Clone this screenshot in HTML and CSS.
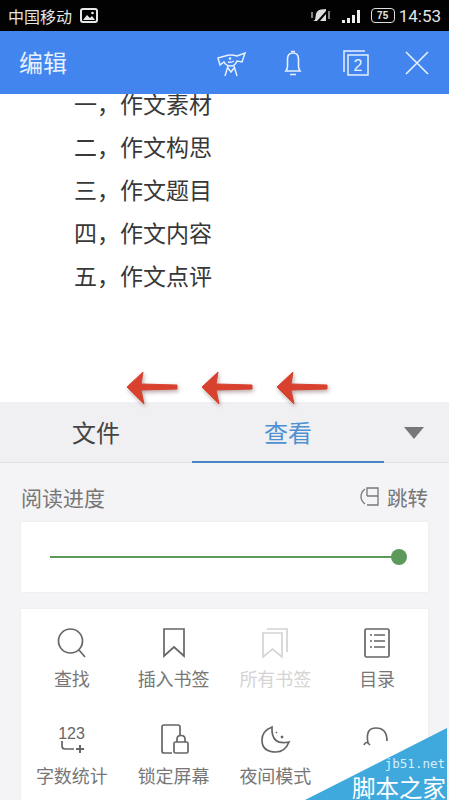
FILE: index.html
```html
<!DOCTYPE html>
<html>
<head>
    <meta charset="utf-8">
    <title>编辑</title>
    <link rel="stylesheet" href="styles.css">
</head>
<body>
    <div class="screen">
        <!-- status bar -->
        <div class="status-bar">
            <div class="status-left">
                <span class="carrier">中国移动</span>
                <svg class="pic-icon" width="18" height="15" viewBox="0 0 18 15">
                    <rect x="1" y="1" width="16" height="13" rx="2" fill="none" stroke="#e8e8e8" stroke-width="2"/>
                    <path d="M3 12 L7 7 L10 10 L12 8 L15 12 Z" fill="#e8e8e8"/>
                    <circle cx="12.500" cy="5" r="1.300" fill="#e8e8e8"/>
                </svg>
            </div>
            <div class="status-right">
                <svg class="mute-icon" width="20" height="16" viewBox="0 0 20 16">
                    <path d="M4 12 L5 6 Q6 2 10 1.500 L15 1 L15 3 L6 13 L2 13 Z" fill="#dedede"/>
                    <path d="M9 13 L15 6 L15 13 Z" fill="#dedede"/>
                    <path d="M1 4 L1 10 M18 3 L18 11" stroke="#aaa" stroke-width="1.500"/>
                </svg>
                <svg class="signal-icon" width="22" height="14" viewBox="0 0 22 14">
                    <rect x="0" y="11" width="3" height="3" fill="#eee"/>
                    <rect x="5" y="9" width="3" height="5" fill="#eee"/>
                    <rect x="10" y="6" width="3" height="8" fill="#eee"/>
                    <rect x="15" y="1" width="3" height="13" fill="#eee"/>
                </svg>
                <span class="battery"><span class="battery-level">75</span></span>
                <span class="clock">14:53</span>
            </div>
        </div>

        <!-- blue title bar -->
        <div class="title-bar">
            <span class="title-text">编辑</span>
            <div class="title-icons">
                <svg width="32" height="32" viewBox="0 0 32 32" fill="none" stroke="#e6f0ff" stroke-width="1.500">
                    <path d="M3 11 L10 9 Q16 7 22 9 L30 6 L27 15 L22 14 Q20 19 16 19 Q11 19 9 15 L5 18 Z"/>
                    <path d="M13 19 L10 29 M19 19 L22 29 M13 21 L16 25 L19 21"/>
                    <path d="M13 15 Q16 16 19 14"/>
                    <circle cx="15" cy="11.500" r="0.600"/>
                </svg>
                <svg width="32" height="32" viewBox="0 0 32 32" fill="none" stroke="#e6f0ff" stroke-width="1.600">
                    <path d="M9 24 Q10.500 22 10.500 19 L10.500 12 Q10.500 6 16 6 Q21.500 6 21.500 12 L21.500 19 Q21.500 22 23 24 Z"/>
                    <path d="M14 4.500 L18 4.500 M13 27.500 L19 27.500"/>
                </svg>
                <svg class="tabs-icon" width="32" height="32" viewBox="0 0 32 32" fill="none" stroke="#e6f0ff" stroke-width="1.500">
                    <path d="M26 4 L5 4 L5 25"/>
                    <rect x="9" y="8" width="20" height="20"/>
                    <text x="19" y="24" class="tabs-count">2</text>
                </svg>
                <svg width="32" height="32" viewBox="0 0 32 32" fill="none" stroke="#e6f0ff" stroke-width="1.600">
                    <path d="M5 5 L27 27 M27 5 L5 27"/>
                </svg>
            </div>
        </div>

        <!-- document text -->
        <div class="doc">
            <p>一，作文素材</p>
            <p>二，作文构思</p>
            <p>三，作文题目</p>
            <p>四，作文内容</p>
            <p>五，作文点评</p>
        </div>

        <!-- bottom panel -->
        <div class="panel">
            <div class="tabs">
                <div class="tab">文件</div>
                <div class="tab active">查看</div>
                <div class="tab-more"><span class="caret"></span></div>
            </div>
            <div class="panel-body">
                <div class="progress-head">
                    <span>阅读进度</span>
                    <span class="jump">
                        <svg width="19" height="19" viewBox="0 0 19 19" fill="none" stroke="#777" stroke-width="1.300">
                            <path d="M7 9 L7 1 L18 1 L18 18 L7 18 M7 9 L18 9"/>
                            <path d="M5 2 Q1 5 1 9.500 Q1 14 5 17"/>
                        </svg>
                        跳转
                    </span>
                </div>
                <div class="card progress-card">
                    <div class="track"><span class="thumb"></span></div>
                </div>
                <div class="card tools">
                    <div class="tool">
                        <svg width="32" height="32" viewBox="0 0 32 32" fill="none" stroke="#666" stroke-width="1.700">
                            <circle cx="14.500" cy="14" r="12"/>
                            <path d="M23 23 L29 30"/>
                        </svg>
                        <span>查找</span>
                    </div>
                    <div class="tool">
                        <svg width="32" height="32" viewBox="0 0 32 32" fill="none" stroke="#666" stroke-width="1.700">
                            <path d="M6 2 L26 2 L26 29 L16 20 L6 29 Z"/>
                        </svg>
                        <span>插入书签</span>
                    </div>
                    <div class="tool disabled">
                        <svg width="32" height="32" viewBox="0 0 32 32" fill="none" stroke="#d4d4d4" stroke-width="1.700">
                            <path d="M4 6 L23 6 L23 30 L13.500 22 L4 30 Z"/>
                            <path d="M8 2 L28 2 L28 25"/>
                        </svg>
                        <span>所有书签</span>
                    </div>
                    <div class="tool">
                        <svg width="32" height="32" viewBox="0 0 32 32" fill="none" stroke="#666" stroke-width="1.700">
                            <rect x="4" y="2" width="24" height="28" rx="1.500"/>
                            <path d="M9 8 L11 8 M13 8 L24 8 M9 14 L11 14 M13 14 L24 14 M9 20 L11 20 M13 20 L24 20"/>
                        </svg>
                        <span>目录</span>
                    </div>
                    <div class="tool">
                        <svg width="32" height="32" viewBox="0 0 32 32" fill="none" stroke="#666" stroke-width="1.700">
                            <text x="15.500" y="15" class="count-digits">123</text>
                            <path d="M6 17 L6 22 Q6 25 9 25 L18 25"/>
                            <path d="M20 25 L28 25 M24 21 L24 29" stroke-width="2"/>
                        </svg>
                        <span>字数统计</span>
                    </div>
                    <div class="tool">
                        <svg width="32" height="32" viewBox="0 0 32 32" fill="none" stroke="#666" stroke-width="1.700">
                            <path d="M14 29 L6 29 Q4 29 4 27 L4 3 Q4 1 6 1 L20 1 Q22 1 22 3 L22 11"/>
                            <rect x="16" y="18" width="14" height="11" rx="1.500"/>
                            <path d="M19 18 L19 15 Q19 11.500 23 11.500 Q27 11.500 27 15 L27 18"/>
                        </svg>
                        <span>锁定屏幕</span>
                    </div>
                    <div class="tool">
                        <svg width="32" height="32" viewBox="0 0 32 32" fill="none" stroke="#666" stroke-width="1.700">
                            <path d="M13 3 Q3 7 3 16 Q3 28 17 28 Q26 28 30 18 Q12 22 13 3 Z"/>
                            <path d="M17 8 L18 9 M22 12 L24 14 M24 12 L22 14" stroke-width="1.500"/>
                        </svg>
                        <span>夜间模式</span>
                    </div>
                    <div class="tool">
                        <svg width="32" height="32" viewBox="0 0 32 32" fill="none" stroke="#666" stroke-width="1.700">
                            <path d="M7 19 Q4 4 15 4 Q26 4 26 17"/>
                            <path d="M3 21 Q5 16 9 21"/>
                        </svg>
                    </div>
                </div>
            </div>
        </div>

        <!-- red arrows drawn over the screenshot -->
        <div class="arrows">
            <svg width="52" height="34" viewBox="0 0 52 34"><path d="M1 16 L17 1 L15 13 L51 14 L51 18 L15 19 L18 33 Z"/></svg>
            <svg width="52" height="34" viewBox="0 0 52 34"><path d="M1 16 L17 1 L15 13 L51 14 L51 18 L15 19 L18 33 Z"/></svg>
            <svg width="52" height="34" viewBox="0 0 52 34"><path d="M1 16 L17 1 L15 13 L51 14 L51 18 L15 19 L18 33 Z"/></svg>
        </div>

        <!-- watermark corner -->
        <div class="watermark">
            <span class="wm-url">jb51.net</span>
            <span class="wm-name">脚本之家</span>
        </div>
    </div>
</body>
</html>
```

FILE: styles.css
```css
html, body {
    margin: 0;
    padding: 0;
    height: 800px;
    overflow: hidden;
    background-color: #fff;
}
.screen {
    position: relative;
    width: 449px;
    height: 800px;
    overflow: hidden;
    font-family: "Noto Sans CJK SC", "Noto Sans", sans-serif;
}

/* status bar */
.status-bar {
    height: 31px;
    background-color: #020202;
    color: #e4e4e4;
    display: flex;
    justify-content: space-between;
    align-items: center;
    padding: 0 8px;
    box-sizing: border-box;
}
.status-left, .status-right {
    display: flex;
    align-items: center;
}
.carrier {
    font-size: 16px;
    line-height: 20px;
}
.pic-icon {
    margin-left: 8px;
}
.mute-icon {
    margin-right: 11px;
}
.signal-icon {
    margin-right: 7px;
}
.battery {
    width: 22px;
    height: 13px;
    border: 1px solid #ddd;
    border-radius: 4px;
    display: flex;
    align-items: center;
    justify-content: center;
    margin-right: 4px;
}
.battery-level {
    font-family: "Liberation Sans", sans-serif;
    font-size: 10px;
    font-weight: bold;
    line-height: 11px;
}
.clock {
    font-family: "Roboto", sans-serif;
    font-size: 17px;
    line-height: 20px;
}

/* title bar */
.title-bar {
    height: 63px;
    background-color: #4285ee;
    display: flex;
    align-items: center;
    justify-content: space-between;
    padding: 0 16px 0 19px;
    box-sizing: border-box;
}
.title-text {
    color: #e6f0ff;
    font-size: 24px;
    line-height: 30px;
    margin-top: -2px;
}
.title-icons {
    display: flex;
    gap: 30px;
}
.tabs-count {
    font-family: "Liberation Sans", sans-serif;
    font-size: 16px;
    fill: #e6f0ff;
    stroke: none;
    text-anchor: middle;
}

/* document */
.doc {
    height: 308px;
    overflow: hidden;
    background-color: #fff;
    padding-left: 74px;
    color: #383838;
    font-size: 23px;
    line-height: 43px;
}
.doc p {
    margin: 0;
}
.doc p:first-child {
    margin-top: -12px;
}

/* panel */
.panel {
    background-color: #f4f4f6;
    height: 398px;
}
.tabs {
    height: 61px;
    display: flex;
    background-color: #f0f0f2;
    border-bottom: 1px solid #e2e2e2;
    box-sizing: border-box;
}
.tab {
    width: 192px;
    text-align: center;
    font-size: 24px;
    line-height: 60px;
    color: #444;
    box-sizing: border-box;
}
.tab.active {
    color: #4f90d2;
    border-bottom: 2px solid #4a82c8;
    height: 61px;
}
.tab-more {
    flex: 1;
    display: flex;
    justify-content: center;
    padding: 25px 5px 0 0;
    box-sizing: border-box;
}
.caret {
    width: 0;
    height: 0;
    border-left: 10px solid transparent;
    border-right: 10px solid transparent;
    border-top: 12px solid #777;
}
.panel-body {
    padding: 0 21px;
}
.progress-head {
    display: flex;
    justify-content: space-between;
    align-items: center;
    height: 59px;
    padding-top: 8px;
    box-sizing: border-box;
    color: #777;
    font-size: 21px;
    line-height: 26px;
}
.jump {
    display: flex;
    align-items: center;
    gap: 8px;
    font-size: 20.500px;
}
.card {
    background-color: #fff;
    box-shadow: 0 0 2px #e8e8ea;
}
.progress-card {
    height: 70px;
    padding: 0 29px;
    display: flex;
    align-items: center;
    box-sizing: border-box;
}
.track {
    position: relative;
    flex: 1;
    height: 2px;
    background-color: #5c9a5c;
}
.thumb {
    position: absolute;
    right: -8px;
    top: -7px;
    width: 16px;
    height: 16px;
    border-radius: 50%;
    background-color: #5c9a5c;
}
.tools {
    margin-top: 17px;
    display: grid;
    grid-template-columns: repeat(4, 1fr);
    grid-auto-rows: 97px;
    padding-top: 18px;
    height: 240px;
    box-sizing: border-box;
}
.tool {
    display: flex;
    flex-direction: column;
    align-items: center;
    color: #777;
    font-size: 18px;
    line-height: 24px;
}
.tool span {
    margin-top: 7px;
}
.tool.disabled {
    color: #d4d4d4;
}
.count-digits {
    font-family: "Liberation Sans", sans-serif;
    font-size: 16px;
    fill: #666;
    stroke: none;
    text-anchor: middle;
}

/* annotation arrows */
.arrows {
    position: absolute;
    left: 126px;
    top: 371px;
    display: flex;
    gap: 23px;
}
.arrows svg {
    fill: #d9412f;
    stroke: #d9412f;
    stroke-width: 1;
    filter: drop-shadow(1px 2px 2px rgba(90, 50, 50, 0.45));
}

/* watermark */
.watermark {
    position: absolute;
    right: 2px;
    bottom: 0;
    width: 142px;
    height: 72px;
    color: #fff;
}
.watermark::before {
    content: "";
    position: absolute;
    inset: 0;
    background-color: #3fa9dd;
    clip-path: polygon(100% 0, 100% 100%, 0 100%);
}
.wm-url {
    position: absolute;
    right: 2px;
    top: 29px;
    font-family: "DejaVu Sans Mono", monospace;
    font-size: 12.500px;
    line-height: 13px;
    color: #d8eefa;
}
.wm-name {
    position: absolute;
    right: 1px;
    top: 47px;
    font-size: 23.500px;
    line-height: 24px;
    white-space: nowrap;
}
```
